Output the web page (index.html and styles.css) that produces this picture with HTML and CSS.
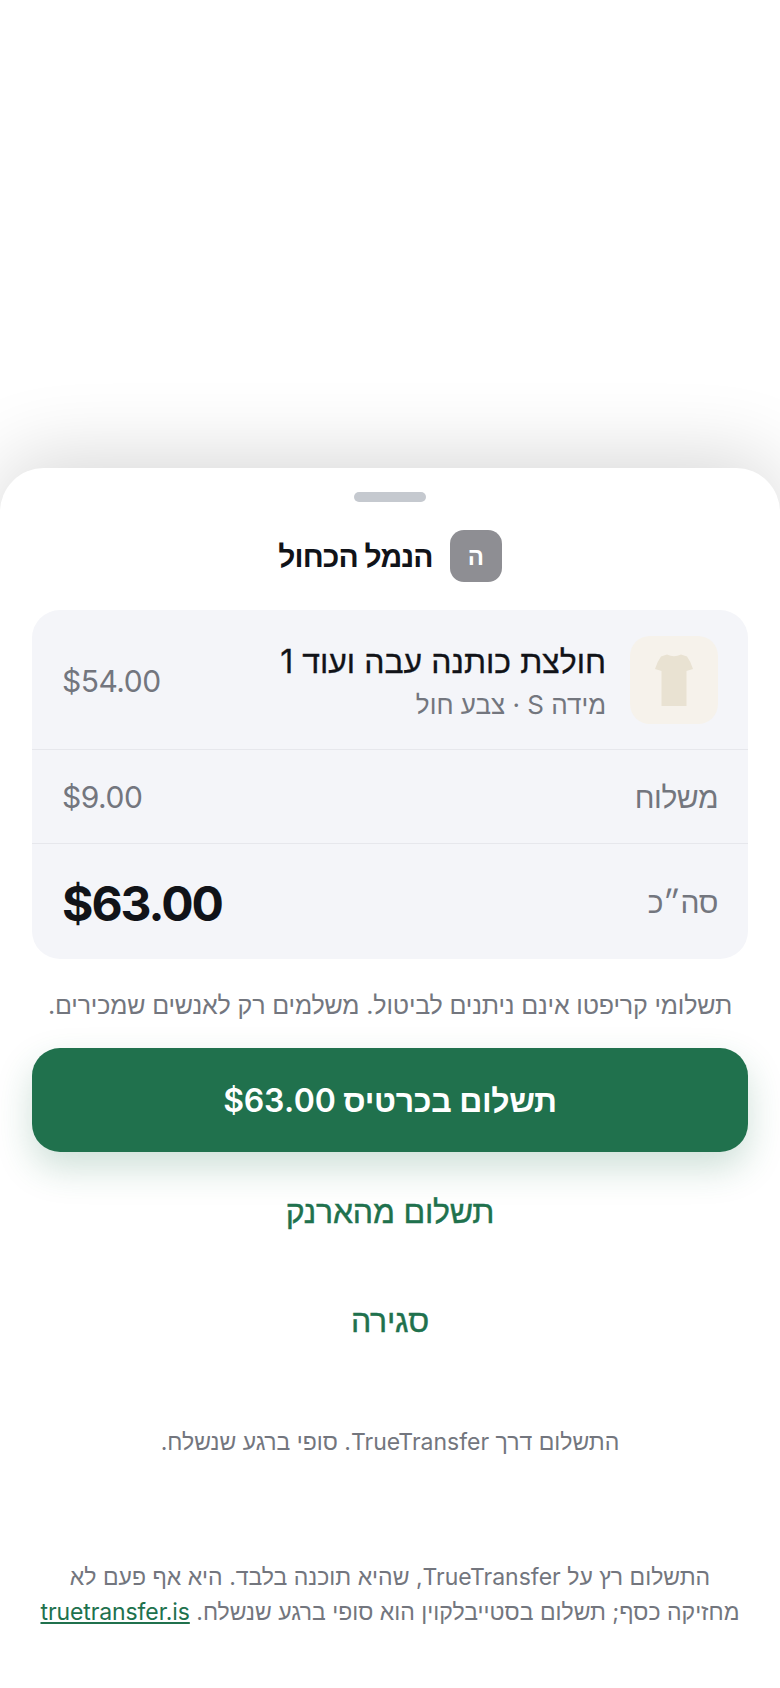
FILE: index.html
```html
<!DOCTYPE html>
<html lang="he" dir="rtl">
<head>
    <meta charset="UTF-8">
    <meta name="viewport" content="width=device-width, initial-scale=1.0">
    <title>תשלום</title>
    <link rel="stylesheet" href="styles.css">
</head>
<body>
    <div class="sheet">
        <div class="handle"></div>

        <div class="merchant">
            <div class="merchant-logo">ה</div>
            <div class="merchant-name">הנמל הכחול</div>
        </div>

        <div class="summary">
            <div class="row row-item">
                <div class="thumb">
                    <svg width="38" height="52" viewBox="0 0 38 52">
                        <path d="M12 0.5 Q19 4 26 0.5 L32 2.5 Q36 8 38 15 L31.5 17 V52 H6.5 V17 L0 15 Q2 8 6 2.5 Z" fill="#e9e2d2"/>
                    </svg>
                </div>
                <div class="item-info">
                    <div class="item-title">חולצת כותנה עבה ועוד 1</div>
                    <div class="item-meta">מידה S · צבע חול</div>
                </div>
                <div class="amount">$54.00</div>
            </div>
            <div class="row row-shipping">
                <span class="label">משלוח</span>
                <span class="amount">$9.00</span>
            </div>
            <div class="row row-total">
                <span class="label">סה״כ</span>
                <span class="total">$63.00</span>
            </div>
        </div>

        <p class="warning">תשלומי קריפטו אינם ניתנים לביטול. משלמים רק לאנשים שמכירים.</p>

        <a href="#" class="button-primary">תשלום בכרטיס $63.00</a>
        <a href="#" class="button-link button-wallet">תשלום מהארנק</a>
        <a href="#" class="button-link button-close">סגירה</a>

        <p class="via">התשלום דרך TrueTransfer. סופי ברגע שנשלח.</p>

        <p class="legal">
            התשלום רץ על TrueTransfer, שהיא תוכנה בלבד. היא אף פעם לא מחזיקה כסף; תשלום בסטייבלקוין הוא סופי ברגע שנשלח.
            <a href="#">truetransfer.is</a>
        </p>
    </div>
</body>
</html>
```

FILE: styles.css
```css
html, body {
    margin: 0;
    padding: 0;
}

body {
    font-family: Inter, Roboto, "Liberation Sans", sans-serif;
    background-color: #fff;
    color: #111318;
    height: 1688px;
    overflow: hidden;
    padding-top: 468px;
    box-sizing: border-box;
}

.sheet {
    height: 1220px;
    box-sizing: border-box;
    padding: 24px 32px 0;
    background-color: #fff;
    border-radius: 44px 44px 0 0;
    box-shadow: 0 -10px 80px rgba(0, 0, 0, 0.16);
    display: flex;
    flex-direction: column;
}

.handle {
    width: 72px;
    height: 10px;
    flex-shrink: 0;
    margin: 0 auto;
    background-color: #c5c9cf;
    border-radius: 5px;
}

.merchant {
    display: flex;
    align-items: center;
    justify-content: center;
    gap: 17px;
    margin-top: 28px;
    height: 52px;
    flex-shrink: 0;
}

.merchant-logo {
    width: 52px;
    height: 52px;
    display: flex;
    align-items: center;
    justify-content: center;
    background-color: #8e8e93;
    border-radius: 14px;
    color: #fff;
    font-size: 24px;
    font-weight: 700;
}

.merchant-name {
    font-size: 30px;
    font-weight: 600;
    letter-spacing: -0.9px;
}

.summary {
    margin-top: 28px;
    flex-shrink: 0;
    background-color: #f4f5f9;
    border-radius: 28px;
}

.row {
    display: flex;
    align-items: center;
    justify-content: space-between;
    padding: 0 30px;
}

.row-item {
    height: 140px;
    gap: 24px;
    border-bottom: 1px solid #e6e7ec;
    box-sizing: border-box;
}

.row-item .amount {
    margin-top: 3px;
}

.row-shipping {
    height: 94px;
    border-bottom: 1px solid #e6e7ec;
    box-sizing: border-box;
}

.row-total {
    height: 115px;
}

.thumb {
    width: 88px;
    height: 88px;
    flex-shrink: 0;
    display: flex;
    align-items: center;
    justify-content: center;
    background-color: #f6f2eb;
    border-radius: 20px;
}

.item-info {
    flex: 1;
    margin-top: 3px;
}

/* Hebrew has no medium cut here, so thicken the regular one a little */
.item-title {
    font-size: 32px;
    line-height: 44px;
    -webkit-text-stroke: 0.3px currentColor;
}

.item-meta {
    font-size: 26px;
    line-height: 36px;
    color: #73767e;
    margin-top: 3px;
}

.amount, .label {
    font-size: 30px;
    letter-spacing: -0.5px;
    color: #73767e;
}

.total {
    font-size: 48px;
    font-weight: 650;
    letter-spacing: -2px;
    margin-top: 3px;
}

.warning {
    margin: 28px 0 0;
    flex-shrink: 0;
    font-size: 25px;
    letter-spacing: -0.15px;
    line-height: 36px;
    color: #73767e;
    text-align: center;
}

.button-primary {
    display: flex;
    align-items: center;
    justify-content: center;
    height: 104px;
    margin-top: 25px;
    flex-shrink: 0;
    background-color: #20714d;
    border-radius: 28px;
    box-shadow: 0 16px 36px rgba(32, 113, 77, 0.22);
    color: #fff;
    font-size: 32px;
    font-weight: 600;
    letter-spacing: -0.3px;
    text-decoration: none;
}

.button-link {
    display: flex;
    align-items: center;
    justify-content: center;
    height: 108px;
    flex-shrink: 0;
    color: #20714d;
    font-size: 32px;
    letter-spacing: -0.2px;
    -webkit-text-stroke: 0.4px currentColor;
    text-decoration: none;
}

.button-wallet {
    margin-top: 5px;
}

.button-close {
    margin-top: 1px;
}

.via {
    margin: 52px 0 0;
    flex-shrink: 0;
    font-size: 23px;
    line-height: 32px;
    color: #73767e;
    text-align: center;
}

.legal {
    margin: 102px 0 0;
    flex-shrink: 0;
    font-size: 23px;
    line-height: 35px;
    color: #73767e;
    text-align: center;
}

.legal a {
    color: #20714d;
    letter-spacing: -0.1px;
}
```
